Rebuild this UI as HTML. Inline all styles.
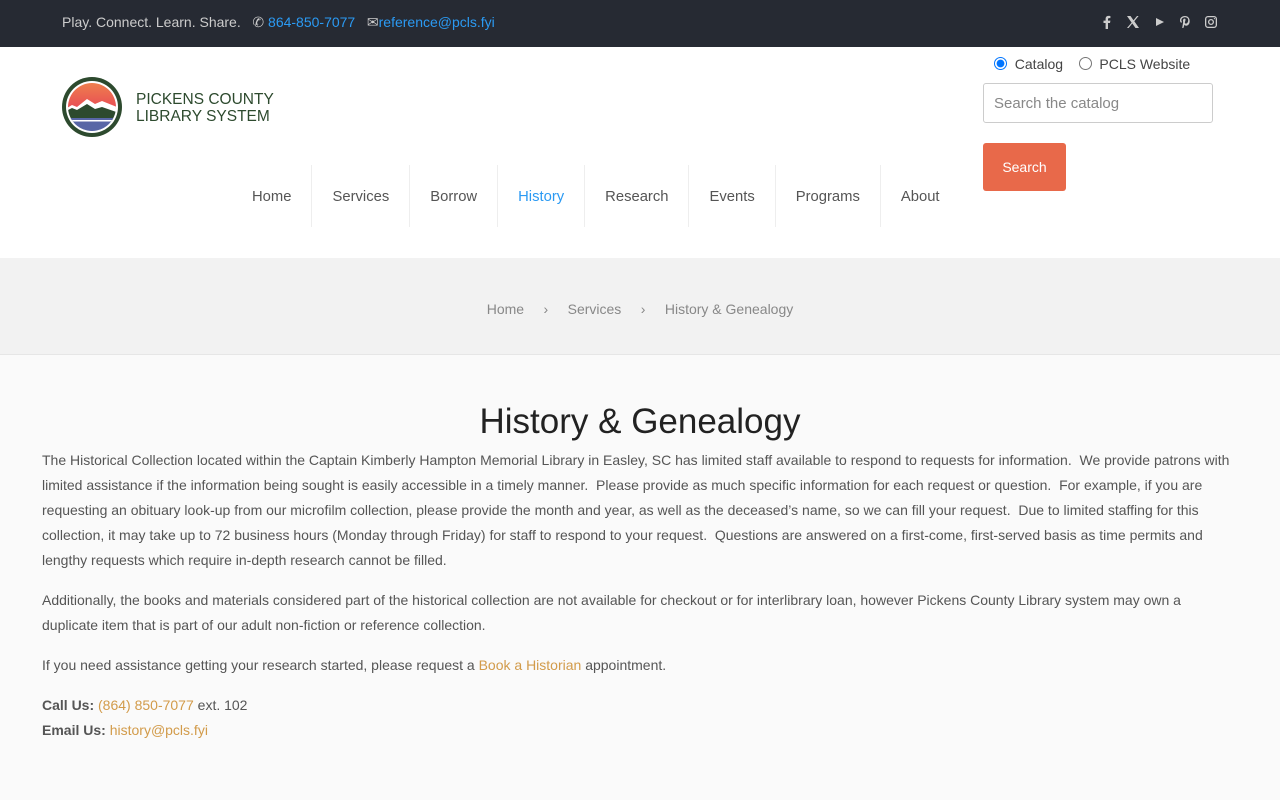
<!DOCTYPE html>
<html><head><meta charset="utf-8"><style>
*{margin:0;padding:0;box-sizing:border-box}
body{width:1280px;height:800px;overflow:hidden;font-family:"Liberation Sans",sans-serif;background:#fafafa;color:#555}
.top{height:47px;background:#262a33;position:relative;color:#ccc;font-size:14px}
.top .l{position:absolute;left:62px;top:14px}
.top a{color:#2b9af3;text-decoration:none}
.soc{position:absolute;left:1100px;top:15px;display:flex;gap:12px}
.soc svg{width:14px;height:14px;fill:#ccc}
header{height:211px;background:#fff;position:relative}
.nav{position:absolute;top:118px;left:232px;display:flex;height:62px}
.nav div{padding:0 20px;font-size:14.8px;color:#555;line-height:64px;border-right:1px solid #eee;height:62px}
.nav div:last-child{border:none}
.crumb{height:97px;background:#f2f2f2;border-bottom:1px solid #e6e6e6;text-align:center;line-height:103px;font-size:14px;color:#888}
h1{font-weight:normal;font-size:35px;color:#222;text-align:center;margin-top:45px;line-height:44px}
.c{padding:0 42px;font-size:14px;line-height:25px;color:#555;margin-top:4px}
.c p{margin-bottom:15px}
.o{color:#d29b4a}
</style></head><body>
<div class="top"><div class="l">Play. Connect. Learn. Share. &nbsp;&nbsp;<span style="color:#ccc">✆</span> <a>864-850-7077</a> &nbsp;&nbsp;<span style="color:#ccc">✉</span><a>reference@pcls.fyi</a></div>
<div class="soc">
<svg viewBox="0 0 14 14"><path d="M8 14V8h2l.4-2.4H8V4.2c0-.7.3-1.1 1.1-1.1h1.3V1c-.3 0-1-.1-1.9-.1C6.6.9 5.6 2 5.6 4v1.6H3.5V8h2.1v6z"/></svg>
<svg viewBox="0 0 14 14"><path d="M1 1h3.5l3 4.2L11 1h1.6L8.3 6.2 13 13H9.5L6.3 8.5 2.6 13H1l4.6-5.4z"/></svg>
<svg viewBox="0 0 14 14"><path d="M4 3l8 4-8 4z"/></svg>
<svg viewBox="0 0 14 14"><path d="M7 1C3.5 1 2 3.3 2 5.2c0 1.3.5 2.3 1.5 2.7l.4-1.2C3.5 6.2 3.4 5.8 3.4 5.3 3.4 3.5 4.8 2.3 7 2.3c2 0 3.2 1.2 3.2 2.8 0 2-1 3.5-2.3 3.5-.7 0-1.2-.6-1-1.3l.6-2.3c.2-.8-.3-1.4-1-1.4-.9 0-1.5.9-1.5 2 0 .7.2 1.2.2 1.2L4.2 13h1.2l1-3.2c.3.5 1 .9 1.7.9 2.2 0 3.6-2 3.6-4.6C11.7 3 9.8 1 7 1z"/></svg>
<svg viewBox="0 0 14 14"><path d="M4 1h6a3 3 0 013 3v6a3 3 0 01-3 3H4a3 3 0 01-3-3V4a3 3 0 013-3zm0 1.3A1.7 1.7 0 002.3 4v6A1.7 1.7 0 004 11.7h6a1.7 1.7 0 001.7-1.7V4A1.7 1.7 0 0010 2.3zM7 4a3 3 0 110 6 3 3 0 010-6zm0 1.3a1.7 1.7 0 100 3.4 1.7 1.7 0 000-3.4zM10.4 3a.6.6 0 110 1.2.6.6 0 010-1.2z"/></svg>
</div></div>
<header>
<svg style="position:absolute;left:62px;top:30px" width="60" height="60" viewBox="0 0 60 60">
<defs><clipPath id="k"><circle cx="30" cy="30" r="24"/></clipPath><linearGradient id="g" x1="0" y1="0" x2="0" y2="1"><stop offset="0" stop-color="#f08a4b"/><stop offset="1" stop-color="#e84c55"/></linearGradient></defs>
<circle cx="30" cy="30" r="30" fill="#2d4a2e"/><circle cx="30" cy="30" r="26" fill="#fff"/>
<g clip-path="url(#k)"><rect x="0" y="0" width="60" height="32" fill="url(#g)"/><path d="M0 34l10-6 5 2 10-8 8 5 7-3 20 8v10H0z" fill="#fff"/><path d="M0 36l10-5 5 2 10-6 8 5 7-2 20 7v8H0z" fill="#2d4a2e"/><rect x="0" y="41" width="60" height="20" fill="#5866a6"/><rect x="0" y="43" width="60" height="1.5" fill="#fff"/></g></svg>
<div style="position:absolute;left:136px;top:44px;font-size:15.5px;line-height:17px;color:#2d4a2e">PICKENS COUNTY<br>LIBRARY SYSTEM</div>
<div style="position:absolute;left:994px;top:9px;font-size:14px;color:#444"><input type="radio" checked style="vertical-align:-1px"> &nbsp;Catalog &nbsp;&nbsp;&nbsp;<input type="radio" style="vertical-align:-1px"> &nbsp;PCLS Website</div>
<div style="position:absolute;left:983px;top:36px;width:230px;height:40px;border:1px solid #ccc;border-radius:3px;padding:11px 10px;font-size:15px;color:#888">Search the catalog</div>
<div style="position:absolute;left:983px;top:96px;width:83px;height:48px;background:#e8694a;border-radius:3px;color:#fff;font-size:14px;text-align:center;line-height:48px">Search</div>
<div class="nav"><div>Home</div><div>Services</div><div>Borrow</div><div style="color:#2b9af3">History</div><div>Research</div><div>Events</div><div>Programs</div><div>About</div></div>
</header>
<div class="crumb">Home &nbsp;&nbsp;&nbsp;&nbsp;›&nbsp;&nbsp;&nbsp;&nbsp; Services &nbsp;&nbsp;&nbsp;&nbsp;›&nbsp;&nbsp;&nbsp;&nbsp; History &amp; Genealogy</div>
<h1>History &amp; Genealogy</h1>
<div class="c">
<p>The Historical Collection located within the Captain Kimberly Hampton Memorial Library in Easley, SC has limited staff available to respond to requests for information.&nbsp; We provide patrons with limited assistance if the information being sought is easily accessible in a timely manner.&nbsp; Please provide as much specific information for each request or question.&nbsp; For example, if you are requesting an obituary look-up from our microfilm collection, please provide the month and year, as well as the deceased’s name, so we can fill your request.&nbsp; Due to limited staffing for this collection, it may take up to 72 business hours (Monday through Friday) for staff to respond to your request.&nbsp; Questions are answered on a first-come, first-served basis as time permits and lengthy requests which require in-depth research cannot be filled.</p>
<p>Additionally, the books and materials considered part of the historical collection are not available for checkout or for interlibrary loan, however Pickens County Library system may own a duplicate item that is part of our adult non-fiction or reference collection.</p>
<p>If you need assistance getting your research started, please request a <span class="o">Book a Historian</span> appointment.</p>
<p><b>Call Us:</b> <span class="o">(864) 850-7077</span> ext. 102<br><b>Email Us:</b> <span class="o">history@pcls.fyi</span></p>
</div>
</body></html>
